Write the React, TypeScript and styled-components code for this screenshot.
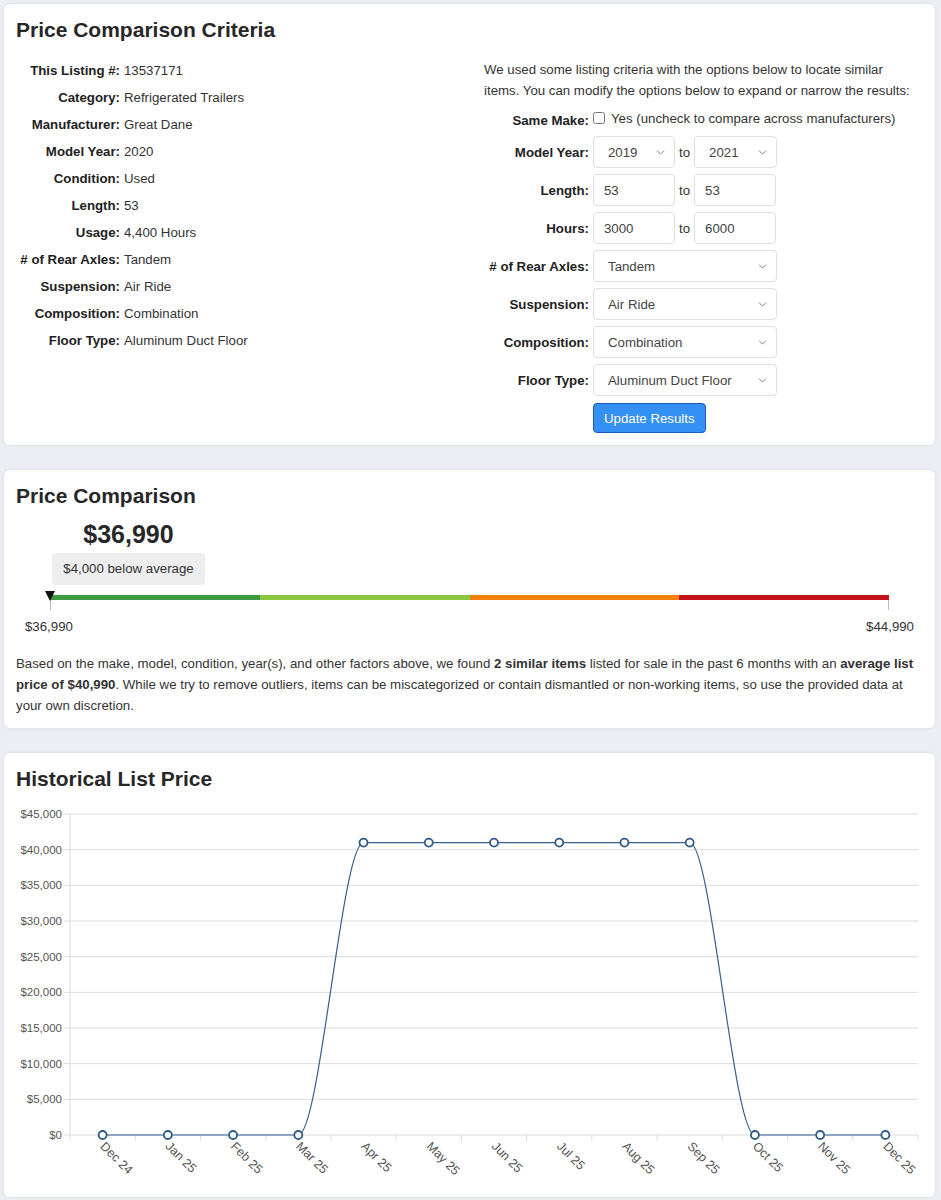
import React from "react";
import styled, { createGlobalStyle } from "styled-components";
import { ChevronDown } from "lucide-react";

const GlobalStyle = createGlobalStyle`
  html, body {
    margin: 0;
    padding: 0;
    background: #eceef3;
  }
  body {
    font-family: "Liberation Sans", Arial, sans-serif;
    font-size: 13.25px;
    color: #333;
  }
  * { box-sizing: border-box; }
`;

const Page = styled.div`
  display: flex;
  flex-direction: column;
  gap: 25px;
  padding: 4px 6px 4px 4px;
`;

const Card = styled.section`
  background: #fff;
  border-radius: 6px;
  box-shadow: 0 0 3px rgba(40, 50, 80, 0.12);
  padding: 12px;
`;

const Title = styled.h2`
  margin: 0;
  font-size: 21px;
  line-height: 28px;
  font-weight: 700;
  color: #272727;
`;

const CriteriaBody = styled.div`
  display: grid;
  grid-template-columns: 468px 1fr;
  margin-top: 13px;
`;

const SpecList = styled.dl`
  display: grid;
  grid-template-columns: 104px auto;
  column-gap: 4px;
  align-content: start;
  margin: 0;
  line-height: 27px;
`;

const SpecLabel = styled.dt`
  font-weight: 700;
  text-align: right;
  color: #222;
`;

const SpecValue = styled.dd`
  margin: 0;
`;

const RightCol = styled.div`
  max-width: 436px;
`;

const Intro = styled.p`
  margin: 2px 0 0;
  line-height: 21px;
`;

const Form = styled.div`
  display: grid;
  grid-template-columns: 105px auto;
  column-gap: 4px;
  row-gap: 6px;
  align-items: center;
  justify-content: start;
  margin-top: 5px;
`;

const FieldLabel = styled.label<{ $top?: boolean }>`
  font-weight: 700;
  text-align: right;
  color: #222;
  padding-top: ${(p) => (p.$top ? "4px" : "0")};
`;

const Field = styled.div`
  display: flex;
  align-items: center;
  gap: 4px;
  min-height: 32px;
`;

const CheckRow = styled.div`
  display: flex;
  align-items: center;
  gap: 6px;
  height: 24px;
`;

const Check = styled.input`
  margin: 0;
  width: 12px;
  height: 12px;
`;

const SelectWrap = styled.div<{ $w: number }>`
  position: relative;
  width: ${(p) => p.$w}px;
  height: 32px;
`;

const Select = styled.select`
  appearance: none;
  width: 100%;
  height: 100%;
  border: 1px solid #dcdfe4;
  border-radius: 4px;
  background: #fff;
  padding: 0 24px 0 14px;
  font-family: inherit;
  font-size: 13.25px;
  color: #444;
`;

const Chevron = styled(ChevronDown)`
  position: absolute;
  right: 8px;
  top: 10px;
  color: #666;
  pointer-events: none;
`;

const TextInput = styled.input`
  width: 82px;
  height: 32px;
  border: 1px solid #dcdfe4;
  border-radius: 4px;
  padding: 0 10px;
  font-family: inherit;
  font-size: 13.25px;
  color: #444;
`;

const To = styled.span`
  color: #333;
`;

const Button = styled.button`
  height: 30px;
  padding: 0 10px;
  background: #3590f3;
  color: #fff;
  border: 1px solid #1d5bb8;
  border-radius: 4px;
  font-family: inherit;
  font-size: 13.25px;
  margin-top: 1px;
  justify-self: start;
`;

const PriceBlock = styled.div`
  display: flex;
  flex-direction: column;
  align-items: center;
  align-self: flex-start;
  margin: 9px 0 0 35px;
  width: 155px;
`;

const BigPrice = styled.div`
  font-size: 25px;
  line-height: 30px;
  font-weight: 700;
  color: #272727;
`;

const Badge = styled.div`
  margin-top: 4px;
  background: #eeeeee;
  border-radius: 4px;
  height: 32px;
  line-height: 32px;
  padding: 0 11px;
  white-space: nowrap;
`;

const Scale = styled.div`
  padding: 7px 34px 0 34px;
`;

const Bar = styled.div`
  position: relative;
  display: flex;
  height: 5px;
  margin-top: 3px;
`;

const Segment = styled.div<{ $c: string }>`
  flex: 1;
  background: ${(p) => p.$c};
`;

const Marker = styled.div`
  position: absolute;
  left: -5px;
  top: -4px;
  width: 0;
  height: 0;
  border-left: 5px solid transparent;
  border-right: 5px solid transparent;
  border-top: 10px solid #111;
`;

const Ticks = styled.div`
  display: flex;
  justify-content: space-between;
  height: 10px;
`;

const Tick = styled.div`
  width: 1px;
  background: #bbb;
`;

const ScaleLabels = styled.div`
  display: flex;
  justify-content: space-between;
  margin: 7px -25px 0;
  line-height: 20px;
`;

const Summary = styled.p`
  margin: 16px 0 0;
  line-height: 21px;
`;

const Chart = styled.svg`
  display: block;
  margin-top: 7px;
  font-family: "Liberation Sans", Arial, sans-serif;
`;

const specs: [string, string][] = [
  ["This Listing #:", "13537171"],
  ["Category:", "Refrigerated Trailers"],
  ["Manufacturer:", "Great Dane"],
  ["Model Year:", "2020"],
  ["Condition:", "Used"],
  ["Length:", "53"],
  ["Usage:", "4,400 Hours"],
  ["# of Rear Axles:", "Tandem"],
  ["Suspension:", "Air Ride"],
  ["Composition:", "Combination"],
  ["Floor Type:", "Aluminum Duct Floor"],
];

const SelectBox = ({ value, w }: { value: string; w: number }) => (
  <SelectWrap $w={w}>
    <Select defaultValue={value}>
      <option>{value}</option>
    </Select>
    <Chevron size={13} strokeWidth={1.5} />
  </SelectWrap>
);

const months = [
  "Dec 24", "Jan 25", "Feb 25", "Mar 25", "Apr 25", "May 25", "Jun 25",
  "Jul 25", "Aug 25", "Sep 25", "Oct 25", "Nov 25", "Dec 25",
];
const values = [0, 0, 0, 0, 40990, 40990, 40990, 40990, 40990, 40990, 0, 0, 0];

const left = 70;
const right = 918;
const top = 814;
const bottom = 1135;
const step = (right - left) / months.length;
const px = (i: number) => left + step * (i + 0.5);
const py = (v: number) => bottom - (v / 45000) * (bottom - top);

// monotone-ish curve: flat tangents at each point
const linePath = values
  .map((v, i) => {
    if (i === 0) return `M ${px(0)} ${py(v)}`;
    const x0 = px(i - 1);
    const y0 = py(values[i - 1]);
    const x1 = px(i);
    const y1 = py(v);
    const d = (x1 - x0) / 3;
    return `C ${x0 + d} ${y0}, ${x1 - d} ${y1}, ${x1} ${y1}`;
  })
  .join(" ");

const yTicks = [45000, 40000, 35000, 30000, 25000, 20000, 15000, 10000, 5000, 0];

const HistoryChart = () => (
  <Chart width={907} height={385} viewBox="16 800 907 385">
    {yTicks.map((t) => (
      <g key={t}>
        <line x1={64} x2={right} y1={py(t)} y2={py(t)} stroke="#dcdcdc" strokeWidth={1} />
        <text x={62} y={py(t) + 4} textAnchor="end" fontSize={11.5} fill="#555">
          ${t.toLocaleString("en-US")}
        </text>
      </g>
    ))}
    <line x1={left} x2={left} y1={top} y2={bottom + 6} stroke="#dcdcdc" />
    {months.map((_, i) => (
      <line
        key={i}
        x1={left + step * (i + 1)}
        x2={left + step * (i + 1)}
        y1={bottom}
        y2={bottom + 6}
        stroke="#dcdcdc"
      />
    ))}
    {months.map((m, i) => (
      <text
        key={m}
        x={px(i) - 3}
        y={bottom + 12}
        fontSize={12.5}
        fill="#555"
        transform={`rotate(45 ${px(i) - 3} ${bottom + 12})`}
      >
        {m}
      </text>
    ))}
    <path d={linePath} fill="none" stroke="#36608e" strokeWidth={1.2} />
    {values.map((v, i) => (
      <circle key={i} cx={px(i)} cy={py(v)} r={4} fill="#fff" stroke="#2d5a86" strokeWidth={1.8} />
    ))}
  </Chart>
);

export default function App() {
  return (
    <>
      <GlobalStyle />
      <Page>
        <Card>
          <Title>Price Comparison Criteria</Title>
          <CriteriaBody>
            <SpecList>
              {specs.map(([k, v]) => (
                <React.Fragment key={k}>
                  <SpecLabel>{k}</SpecLabel>
                  <SpecValue>{v}</SpecValue>
                </React.Fragment>
              ))}
            </SpecList>
            <RightCol>
              <Intro>
                We used some listing criteria with the options below to locate similar items. You can
                modify the options below to expand or narrow the results:
              </Intro>
              <Form>
                <FieldLabel $top>Same Make:</FieldLabel>
                <CheckRow>
                  <Check type="checkbox" />
                  <span>Yes (uncheck to compare across manufacturers)</span>
                </CheckRow>
                <FieldLabel>Model Year:</FieldLabel>
                <Field>
                  <SelectBox value="2019" w={82} />
                  <To>to</To>
                  <SelectBox value="2021" w={83} />
                </Field>
                <FieldLabel>Length:</FieldLabel>
                <Field>
                  <TextInput defaultValue="53" />
                  <To>to</To>
                  <TextInput defaultValue="53" />
                </Field>
                <FieldLabel>Hours:</FieldLabel>
                <Field>
                  <TextInput defaultValue="3000" />
                  <To>to</To>
                  <TextInput defaultValue="6000" />
                </Field>
                <FieldLabel># of Rear Axles:</FieldLabel>
                <Field>
                  <SelectBox value="Tandem" w={184} />
                </Field>
                <FieldLabel>Suspension:</FieldLabel>
                <Field>
                  <SelectBox value="Air Ride" w={184} />
                </Field>
                <FieldLabel>Composition:</FieldLabel>
                <Field>
                  <SelectBox value="Combination" w={184} />
                </Field>
                <FieldLabel>Floor Type:</FieldLabel>
                <Field>
                  <SelectBox value="Aluminum Duct Floor" w={184} />
                </Field>
                <span />
                <Button>Update Results</Button>
              </Form>
            </RightCol>
          </CriteriaBody>
        </Card>

        <Card>
          <Title>Price Comparison</Title>
          <PriceBlock>
            <BigPrice>$36,990</BigPrice>
            <Badge>$4,000 below average</Badge>
          </PriceBlock>
          <Scale>
            <Bar>
              <Segment $c="#3e9a3d" />
              <Segment $c="#8cc63e" />
              <Segment $c="#f2800e" />
              <Segment $c="#c1141b" />
              <Marker />
            </Bar>
            <Ticks>
              <Tick />
              <Tick />
            </Ticks>
            <ScaleLabels>
              <span>$36,990</span>
              <span>$44,990</span>
            </ScaleLabels>
          </Scale>
          <Summary>
            Based on the make, model, condition, year(s), and other factors above, we found{" "}
            <b>2 similar items</b> listed for sale in the past 6 months with an{" "}
            <b>average list price of $40,990</b>. While we try to remove outliers, items can be
            miscategorized or contain dismantled or non-working items, so use the provided data at
            your own discretion.
          </Summary>
        </Card>

        <Card>
          <Title>Historical List Price</Title>
          <HistoryChart />
        </Card>
      </Page>
    </>
  );
}
